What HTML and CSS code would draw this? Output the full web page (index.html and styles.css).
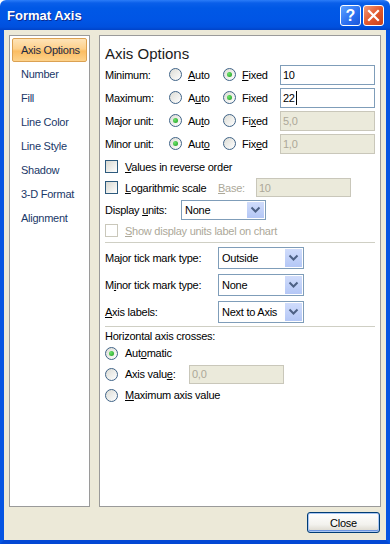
FILE: index.html
```html
<!DOCTYPE html>
<html lang="en">
	<head>
		<meta charset="UTF-8" />
		<meta name="viewport" content="width=device-width, initial-scale=1.0" />
		<title>Format Axis</title>
		<link rel="stylesheet" href="styles.css">
	</head>
	<body>
	<div class="window">
		<div class="titlebar">
			<span class="title">Format Axis</span>
			<div class="tb-buttons">
				<span class="tb-btn help">?</span>
				<span class="tb-btn close">
					<svg width="13" height="13" viewBox="0 0 13 13"><path d="M2 2 L11 11 M11 2 L2 11" stroke="#fff" stroke-width="2.2" stroke-linecap="square"/></svg>
				</span>
			</div>
		</div>

		<div class="client">
			<div class="panels">
				<ul class="nav">
					<li class="selected">Axis Options</li>
					<li>Number</li>
					<li>Fill</li>
					<li>Line Color</li>
					<li>Line Style</li>
					<li>Shadow</li>
					<li>3-D Format</li>
					<li>Alignment</li>
				</ul>

				<div class="pane">
					<h2 class="pane-title">Axis Options</h2>

					<div class="opt-row">
						<span>Minimum:</span>
						<span class="opt"><span class="radio"></span><span><u>A</u>uto</span></span>
						<span class="opt"><span class="radio on"></span><span><u>F</u>ixed</span></span>
						<div class="field">10</div>
					</div>
					<div class="opt-row">
						<span>Maximum:</span>
						<span class="opt"><span class="radio"></span><span>A<u>u</u>to</span></span>
						<span class="opt"><span class="radio on"></span><span>Fixed</span></span>
						<div class="field">22<span class="caret"></span></div>
					</div>
					<div class="opt-row">
						<span>Major unit:</span>
						<span class="opt"><span class="radio on"></span><span>Au<u>t</u>o</span></span>
						<span class="opt"><span class="radio"></span><span>Fi<u>x</u>ed</span></span>
						<div class="field disabled">5,0</div>
					</div>
					<div class="opt-row">
						<span>Minor unit:</span>
						<span class="opt"><span class="radio on"></span><span>Aut<u>o</u></span></span>
						<span class="opt"><span class="radio"></span><span>Fix<u>e</u>d</span></span>
						<div class="field disabled">1,0</div>
					</div>

					<div class="check-row first">
						<span class="check"></span>
						<span><u>V</u>alues in reverse order</span>
					</div>
					<div class="check-row">
						<span class="check"></span>
						<span class="log-label"><u>L</u>ogarithmic scale</span>
						<span class="base-label"><u>B</u>ase:</span>
						<div class="field disabled base">10</div>
					</div>
					<div class="units-row">
						<span class="units-label">Display <u>u</u>nits:</span>
						<div class="combo units">None<span class="drop"><svg width="11" height="8" viewBox="0 0 11 8"><path d="M1.5 1.5 L5.5 5.5 L9.5 1.5" fill="none" stroke="#4d6185" stroke-width="2"/></svg></span></div>
					</div>
					<div class="check-row show-row muted">
						<span class="check off"></span>
						<span><u>S</u>how display units label on chart</span>
					</div>

					<div class="sep first-sep"></div>

					<div class="tick-row">
						<span class="tick-label">Ma<u>j</u>or tick mark type:</span>
						<div class="combo tick">Outside<span class="drop"><svg width="11" height="8" viewBox="0 0 11 8"><path d="M1.5 1.5 L5.5 5.5 L9.5 1.5" fill="none" stroke="#4d6185" stroke-width="2"/></svg></span></div>
					</div>
					<div class="tick-row">
						<span class="tick-label">M<u>i</u>nor tick mark type:</span>
						<div class="combo tick">None<span class="drop"><svg width="11" height="8" viewBox="0 0 11 8"><path d="M1.5 1.5 L5.5 5.5 L9.5 1.5" fill="none" stroke="#4d6185" stroke-width="2"/></svg></span></div>
					</div>
					<div class="tick-row">
						<span class="tick-label"><u>A</u>xis labels:</span>
						<div class="combo tick">Next to Axis<span class="drop"><svg width="11" height="8" viewBox="0 0 11 8"><path d="M1.5 1.5 L5.5 5.5 L9.5 1.5" fill="none" stroke="#4d6185" stroke-width="2"/></svg></span></div>
					</div>

					<div class="sep second-sep"></div>

					<div class="cross-label">Horizontal axis crosses:</div>
					<div class="cross-row auto-row">
						<span class="radio on"></span>
						<span>Aut<u>o</u>matic</span>
					</div>
					<div class="cross-row value-row">
						<span class="radio"></span>
						<span class="value-label">Axis valu<u>e</u>:</span>
						<div class="field disabled cross">0,0</div>
					</div>
					<div class="cross-row max-row">
						<span class="radio"></span>
						<span><u>M</u>aximum axis value</span>
					</div>
				</div>
			</div>

			<div class="footer">
				<button class="btn">Close</button>
			</div>
		</div>
	</div>
	</body>
</html>
```

FILE: styles.css
```css
body {
	margin: 0;
	width: 390px;
	height: 544px;
	overflow: hidden;
	font-family: "Liberation Sans", Arial, sans-serif;
	font-size: 11px;
	letter-spacing: -0.25px;
	color: #000;
}

.window {
	display: flex;
	flex-direction: column;
	height: 544px;
}

/* title bar */
.titlebar {
	height: 30px;
	flex: none;
	display: flex;
	align-items: center;
	justify-content: space-between;
	padding: 0 6px 0 7px;
	background: linear-gradient(#2b7cf8 0, #0a5fe9 3px, #0058e6 8px, #0055e5 20px, #0050de 27px, #0043c8 30px);
	border-radius: 6px 6px 0 0;
}

.title {
	color: #fff;
	font-weight: bold;
	font-size: 13px;
	letter-spacing: 0;
	text-shadow: 1px 1px 0 #0b2a8f;
}

.tb-buttons {
	display: flex;
	gap: 2px;
	padding-top: 1px;
}

.tb-btn {
	width: 21px;
	height: 21px;
	box-sizing: border-box;
	border: 1px solid #fff;
	border-radius: 3px;
	display: flex;
	align-items: center;
	justify-content: center;
}

.help {
	background: linear-gradient(135deg, #5da2ff, #2a6ef0 60%, #1a55d8);
	color: #fff;
	font-weight: bold;
	font-size: 16px;
	letter-spacing: 0;
}

.close {
	background: linear-gradient(135deg, #f29b7c, #e35a2e 50%, #c8401a);
}

/* client area */
.client {
	flex: 1;
	background-color: #ece9d8;
	border-left: 4px solid #0554e2;
	border-right: 4px solid #0554e2;
	border-bottom: 4px solid #0348d4;
	padding: 5px 5px 0 5px;
	display: flex;
	flex-direction: column;
}

.panels {
	display: flex;
	gap: 9px;
	height: 472px;
}

.nav {
	width: 81px;
	box-sizing: border-box;
	margin: 0;
	padding: 2px;
	list-style: none;
	background: #fff;
	border: 1px solid #9a9a9a;
	color: #1a3868;
}

.nav li {
	height: 24px;
	line-height: 22px;
	box-sizing: border-box;
	border: 1px solid transparent;
	padding-left: 8px;
	white-space: nowrap;
}

.nav li.selected {
	border-color: #dba152;
	border-radius: 2px;
	background: linear-gradient(#fee4b8 0, #fdd08b 45%, #fbbd63 55%, #fdd28a 100%);
	color: #1c2a45;
}

.pane {
	width: 282px;
	box-sizing: border-box;
	background: #fff;
	border: 1px solid #9a9a9a;
	padding: 8px 5px 0 5px;
}

.pane-title {
	margin: 0;
	font-weight: normal;
	font-size: 15px;
	letter-spacing: 0;
	line-height: 19px;
	color: #1b1b1b;
}

/* min / max / unit rows */
.opt-row {
	display: grid;
	grid-template-columns: 64px 54px 57px 95px;
	height: 23px;
	align-items: center;
}

.opt {
	display: inline-flex;
	align-items: center;
	gap: 6px;
}

.radio {
	display: inline-block;
	flex: none;
	width: 13px;
	height: 13px;
	box-sizing: border-box;
	border: 1px solid #3f6387;
	border-radius: 50%;
	background: linear-gradient(135deg, #dcdcd5, #fff);
	position: relative;
}

.radio.on::after {
	content: '';
	position: absolute;
	left: 3px;
	top: 3px;
	width: 5px;
	height: 5px;
	border-radius: 50%;
	background: radial-gradient(circle at 35% 35%, #6be46b, #1f9a1f);
}

.field {
	height: 20px;
	box-sizing: border-box;
	border: 1px solid #7f9db9;
	background: #fff;
	padding: 0 2px;
	line-height: 18px;
	display: flex;
	align-items: center;
}

.field.disabled {
	border-color: #c9c7ba;
	background: #ebeadb;
	color: #aca899;
}

.caret {
	display: inline-block;
	width: 1px;
	height: 14px;
	background: #000;
	margin-left: 1px;
}

/* checkboxes */
.check-row {
	display: flex;
	align-items: center;
	gap: 7px;
	height: 21px;
}

.check-row.first {
	margin-top: 1px;
}

.check {
	flex: none;
	width: 13px;
	height: 13px;
	box-sizing: border-box;
	border: 1px solid #2d5a7d;
	background: linear-gradient(135deg, #d8d8d0, #fff);
}

.check.off {
	border-color: #cac8bb;
	background: #fff;
}

.muted {
	color: #aca899;
}

.show-row {
	height: 17px;
}

.log-label {
	width: 86px;
}

.base-label {
	width: 31px;
	color: #aca899;
}

.field.base {
	width: 95px;
	height: 19px;
}

/* combos */
.units-row,
.tick-row {
	display: flex;
	align-items: center;
}

.units-row {
	height: 24px;
}

.units-label {
	width: 76px;
}

.combo {
	position: relative;
	box-sizing: border-box;
	border: 1px solid #7f9db9;
	background: #fff;
	padding-left: 3px;
	display: flex;
	align-items: center;
}

.combo.units {
	width: 85px;
	height: 20px;
}

.combo.tick {
	width: 86px;
	height: 22px;
}

.drop {
	position: absolute;
	right: 1px;
	top: 1px;
	bottom: 1px;
	width: 17px;
	background: linear-gradient(#d0dcfb, #b4c7f6);
	display: flex;
	align-items: center;
	justify-content: center;
}

.sep {
	border-top: 1px solid #cfcfc4;
}

.first-sep {
	margin-top: 3px;
	margin-bottom: 1px;
}

.tick-row {
	height: 27px;
}

.tick-label {
	width: 113px;
}

.second-sep {
	margin-top: 1px;
}

/* axis crosses */
.cross-label {
	height: 19px;
	line-height: 19px;
}

.cross-row {
	display: flex;
	align-items: center;
	gap: 7px;
}

.auto-row {
	height: 14px;
}

.value-row {
	height: 22px;
	margin-top: 3px;
}

.value-label {
	width: 57px;
}

.field.cross {
	width: 95px;
	height: 19px;
}

.max-row {
	height: 20px;
}

/* footer */
.footer {
	display: flex;
	justify-content: flex-end;
	padding: 5px 1px 0 0;
}

.btn {
	width: 73px;
	height: 21px;
	font-family: "Liberation Sans", Arial, sans-serif;
	font-size: 11px;
	letter-spacing: -0.25px;
	color: #000;
	border: 1px solid #003c74;
	border-radius: 3px;
	background: linear-gradient(#fff 0, #f3f2ee 60%, #d9d5ca 100%);
	box-shadow: inset 0 0 0 1px #a9c6f3, inset 0 -1px 0 1px #6c95e1;
	padding: 0;
}
```
